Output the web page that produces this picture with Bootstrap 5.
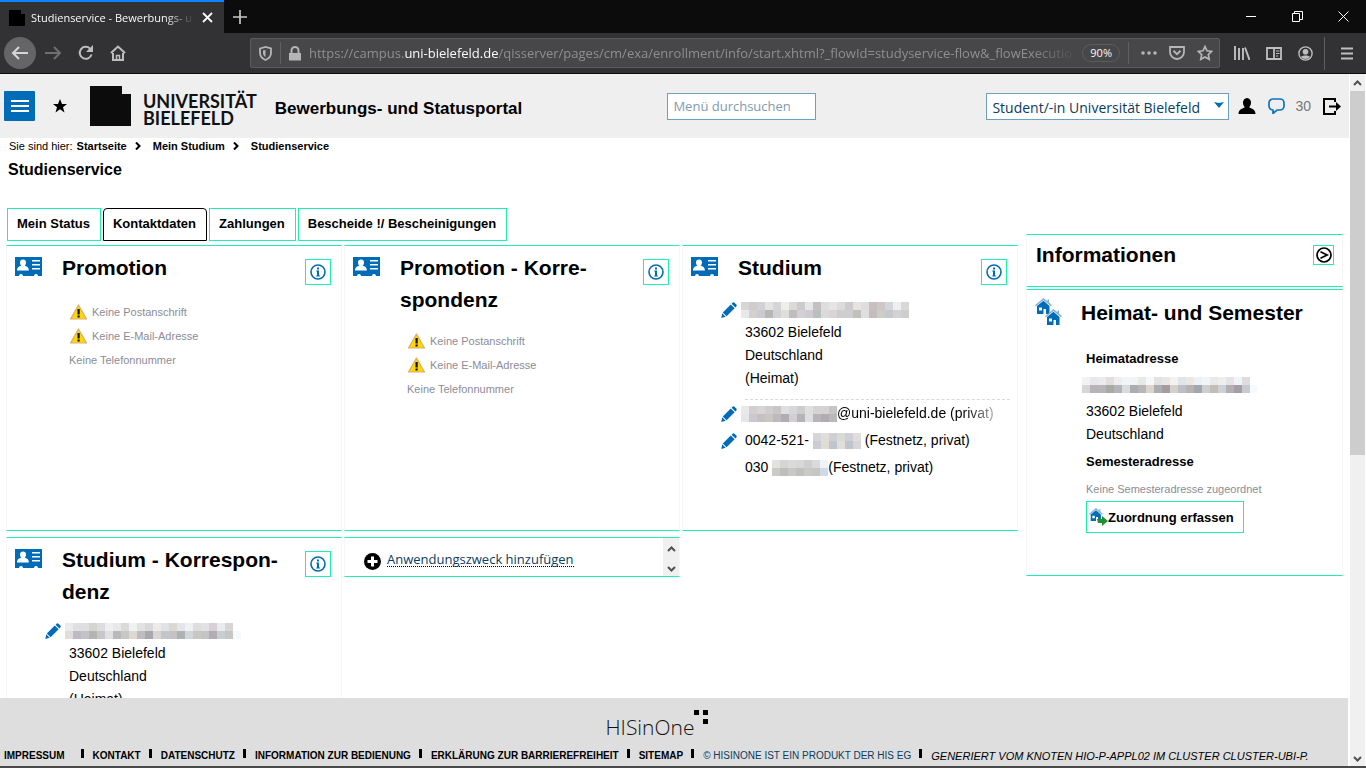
<!DOCTYPE html>
<html lang="de">
<head>
<meta charset="utf-8">
<meta name="viewport" content="width=device-width, initial-scale=1">
<title>Studienservice - Bewerbungs- und Statusportal</title>
<link href="https://cdn.jsdelivr.net/npm/bootstrap@5.3.0/dist/css/bootstrap.min.css" rel="stylesheet">
<style>
:root{--mint:#1ff0b0;--blue:#006cb8;--navy:#0b3c61;--arial:"Liberation Sans",Arial,sans-serif;--ui:"Open Sans","Noto Sans",sans-serif}
body{font-family:var(--arial);font-size:14px;line-height:23px;color:#000;background:#fff}
svg{display:block;flex:none}
a{color:inherit;text-decoration:none}
.icon-btn{border:0;padding:0;background:none;color:inherit;flex:none}

/* browser frame */
.tabstrip{background:#0c0c0d;height:33px;color:#f9f9fa;font:11px/18px var(--ui)}
.tab-active{background:#323234;border-top:2px solid #0a84ff;width:224px;padding-left:9px;padding-right:11px}
.tab-title{margin-left:6px;-webkit-mask-image:linear-gradient(90deg,#000 80%,transparent 98%);mask-image:linear-gradient(90deg,#000 80%,transparent 98%)}
.window-btns{gap:35px;padding-right:17px}
.toolbar{background:#323234;height:41px;border-bottom:1px solid #0c0c0d;color:#bebebf;padding:0 13px 0 4px}
.back{width:32px;height:32px;border-radius:50%;background:#656567;color:#d6d6d7}
.urlbar{background:#474749;border:1px solid #5c5c5e;border-radius:2px;height:30px;color:#b5b5b6;padding:0 6px 0 8px;margin-left:124px}
.url-text{font:13px/20px var(--ui);color:#8f8f91;-webkit-mask-image:linear-gradient(90deg,#000 94%,transparent);mask-image:linear-gradient(90deg,#000 94%,transparent)}
.url-text b{font-weight:400;color:#f9f9fa}
.zoom-pill{font:11px/16px var(--ui);color:#f9f9fa;border:1px solid #5c5c5e;border-radius:9px;padding:0 7px}
.sep{width:1px;background:#5f5f62}
.scrollbar-v{width:17px;background:#f0f0f0;border-left:1px solid #fff;border-right:1px solid #fff}
.scroll-thumb{height:364px;background:#cdcdcd}
.taskbar{height:2px;background:#4a4a4a}

/* portal header */
.portal-head{background:#efefef;height:64px;padding:0 8px 0 4px}
.menu-btn{width:31px;height:30px;background:var(--blue);border-radius:1px}
.fav-btn{margin:0 23px 0 18px}
.uni-name{font:700 18px/17px Lato,sans-serif;color:#111;margin-bottom:-1px}
.portal-title{font-size:17px;font-weight:700;margin-left:18px}
.search{width:149px;height:27px;border:1px solid #6d9fc2;border-radius:0;padding:0 5px;font:13px/18px var(--ui);color:var(--navy)}
.search::placeholder{color:#7f9bb0;opacity:1}
.role-wrap{margin:0 1px 0 170px}
.role{width:243px;height:27px;border:1px solid #6d9fc2;background:#fff;appearance:none;padding:4px 5px 0;font:14px/20px var(--ui);color:var(--navy);border-radius:0}
.role-arrow{right:5px;top:9px;pointer-events:none}
.msg-count{color:#777}

/* content */
.crumbs{font-size:11px;line-height:16px;padding:0 9px}
.page-title{font-size:16px;line-height:20px;font-weight:700;padding-left:8px;margin:6px 0 28px}
.main-row{padding:0 6px;gap:8px}
.side{flex:0 0 317px;padding-top:26px}
.tab-btn{border:1px solid var(--mint);background:#fff;color:#000;font-size:13px;font-weight:700;line-height:20px;height:33px;padding:0 10px 2px 9px;border-radius:0}
.tab-btn.current{border-color:#000;border-radius:4px 4px 0 0}
.tiles{display:grid;grid-template-columns:repeat(3,minmax(0,1fr));gap:6px 2px;align-items:start}
.tile{border:1px solid #f7f7f7;border-top-color:var(--mint);border-bottom-color:var(--mint);background:#fff}
.tile-tall{height:286px}
.tile-head{padding:6px 10px 0 8px}
.tile-head h2,.side-title{font-size:21px;line-height:32px;font-weight:700;margin:0}
.tile-icon{width:27px;margin:5px 20px 0 0}
.info-btn{width:26px;height:26px;border:1px solid var(--mint);color:var(--blue);margin:7px 0 2px}
.hint{font-size:11px;line-height:24px;color:#8c8c96}
.tile-body{padding-left:62px}
.hints{padding-top:13px}
.addr{padding-top:11px}
.line-edit{margin-left:-24px;gap:8px}
.street{height:23px}
.masked{margin-left:-4px}
.divide{border-top:1px dashed #d9d9d9;margin:9px 7px 0 0}
.contact{line-height:27px;height:27px}
.fade-end{-webkit-mask-image:linear-gradient(90deg,#000 88%,transparent 106%);mask-image:linear-gradient(90deg,#000 88%,transparent 106%)}
.add-tile{height:40px}
.add-body{padding:8px 0 0 19px;gap:6px}
.add-link{font:13px/14px var(--ui);color:var(--navy);border-bottom:1px dotted #000}
.mini-scroll{width:16px;background:#f0f0f0}
.side-panel{height:53px;padding:4px 8px 0 9px}
.side-toggle{width:21px;height:20px;border:1px solid var(--mint);margin-top:6px}
.side-main{margin-top:2px;height:287px}
.side-main .tile-head{padding-top:7px}
.side-body{padding:18px 0 0 59px}
.houses{margin:1px 19px 0 0}
.strong13{font-size:13px;font-weight:700}
.assign{border:1px solid var(--mint);background:#fff;height:32px;padding:0 9px 0 2px;font-size:13px;font-weight:700;color:#000}

/* footer */
.foot{background:#dedede;height:68px;margin-right:1px}
.his{font:300 21px/26px "Open Sans",sans-serif;color:#111;padding-right:32px}
.his svg{margin-top:-4px}
.foot-links{font-size:10px;line-height:14px;font-weight:700;padding:0 4px 3px}
.foot-links em{font-size:11px}
.bar{flex:none;width:3px;height:9px;background:#000;margin:0 9px 0 8px}
.mosaic{display:inline-block;vertical-align:middle}
</style>
</head>
<body class="vh-100 d-flex flex-column overflow-hidden">

<svg class="d-none" xmlns="http://www.w3.org/2000/svg">
  <symbol id="i-card" viewBox="0 0 27 19"><path fill="#006cb8" d="M0 0h27v19h-4a2 2 0 0 0-4 0H8a2 2 0 0 0-4 0H0z"/><path fill="#fff" d="M8 2.500a3 3 0 0 1 3 3c0 1.500-.6 2.500-1.300 3.300 2.300.7 4 1.300 4.200 4.700H2c.2-3.400 2-4 4.300-4.700C5.600 8 5 7 5 5.500a3 3 0 0 1 3-3zM17 3h8v1.500h-8zM17 7h8v1.500h-8zM17 11h8v1.500h-8z"/></symbol>
  <symbol id="i-info" viewBox="0 0 16 16"><circle cx="8" cy="8" r="7" fill="none" stroke="currentColor" stroke-width="1.600"/><path fill="currentColor" d="M7 3.600h2v1.800H7zM6.200 6.500H9v5h1v1H6.200v-1H7v-4h-.8z"/></symbol>
  <symbol id="i-warn" viewBox="0 0 18 16"><path d="M9 1 17 15H1z" fill="#ffd800" stroke="#d8ab7c" stroke-width="1.200" stroke-linejoin="round"/><path d="M8 5h2.200v5.500H8zM8 11.500h2.200v2H8z" fill="#111"/></symbol>
  <symbol id="i-pen" viewBox="0 0 16 16"><path fill="#006cb8" d="M11.500.8a1.500 1.500 0 0 1 2 0l1.800 1.800a1.500 1.500 0 0 1 0 2l-.9.9-3.800-3.800zM9.800 2.500l3.800 3.800-8 8L1.800 10.500zM1.200 11.300l3.500 3.500L.3 16z"/></symbol>
  <symbol id="i-house" viewBox="0 0 17 16"><path fill="#7fb2d9" d="M8.500 0 0 7.200l1 1L8.500 2 16 8.200l1-1-3-2.600V1.500h-1.500v1.800z"/><path fill="#006cb8" d="M8.500 2.800 14.500 8v8H11v-5H8.500v5H2V8zM4 9.500v3h3v-3z" fill-rule="evenodd"/></symbol>
  <symbol id="i-up" viewBox="0 0 9 6"><path d="M1 5l3.500-3.500L8 5" fill="none" stroke="#505050" stroke-width="2"/></symbol>
  <symbol id="i-down" viewBox="0 0 9 6"><path d="M1 1l3.500 3.500L8 1" fill="none" stroke="#505050" stroke-width="2"/></symbol>
  <symbol id="i-crumb" viewBox="0 0 6 8"><path d="M1 .5 4.500 4 1 7.500" fill="none" stroke="#000" stroke-width="2"/></symbol>
</svg>

<div class="tabstrip d-flex">
  <div class="tab-active d-flex align-items-center">
    <svg width="16" height="16" viewBox="0 0 16 16"><path d="M0 0h12v4h4v12H0z"/></svg>
    <span class="tab-title flex-grow-1 overflow-hidden text-nowrap">Studienservice - Bewerbungs- u</span>
    <button class="icon-btn ms-1" aria-label="Tab schließen"><svg width="11" height="11" viewBox="0 0 11 11"><path d="M1 1l9 9M10 1l-9 9" stroke="#f9f9fa" stroke-width="1.800"/></svg></button>
  </div>
  <button class="icon-btn ms-2" aria-label="Neuer Tab"><svg width="16" height="16" viewBox="0 0 16 16"><path d="M8 1v14M1 8h14" stroke="#c8c8c9" stroke-width="1.700"/></svg></button>
  <div class="window-btns ms-auto d-flex align-items-center">
    <button class="icon-btn" aria-label="Minimieren"><svg width="11" height="11"><path d="M0 5.500h10" stroke="#fff"/></svg></button>
    <button class="icon-btn" aria-label="Verkleinern"><svg width="11" height="11"><path d="M.5 2.500h7v8h-7zM2.500 2.500v-2h8v8h-3" fill="none" stroke="#fff"/></svg></button>
    <button class="icon-btn" aria-label="Schließen"><svg width="11" height="11"><path d="M.5.500l10 10M10.500.500l-10 10" stroke="#fff"/></svg></button>
  </div>
</div>

<div class="toolbar d-flex align-items-center">
  <button class="icon-btn back d-flex align-items-center justify-content-center" aria-label="Zurück"><svg width="18" height="16" viewBox="0 0 18 16"><path d="M8 2 2 8l6 6M2 8h15" fill="none" stroke="currentColor" stroke-width="2"/></svg></button>
  <button class="icon-btn ms-2" aria-label="Vor"><svg width="18" height="16" viewBox="0 0 18 16"><path d="M10 2l6 6-6 6M16 8H1" fill="none" stroke="#6f6f71" stroke-width="2"/></svg></button>
  <button class="icon-btn ms-3" aria-label="Neu laden"><svg width="16" height="16" viewBox="0 0 16 16"><path d="M13.500 9.500A6 6 0 1 1 12 3.600" fill="none" stroke="currentColor" stroke-width="2"/><path d="M15 0v7H8z" fill="currentColor"/></svg></button>
  <button class="icon-btn ms-3" aria-label="Startseite"><svg width="16" height="16" viewBox="0 0 16 16"><path d="M1 8l7-6.500L15 8M3 8v7h10V8" fill="none" stroke="currentColor" stroke-width="2"/><path d="M6.500 15v-4.500h3V15" fill="none" stroke="currentColor" stroke-width="1.500"/></svg></button>
  <div class="urlbar d-flex align-items-center flex-grow-1 overflow-hidden">
    <svg width="13" height="15" viewBox="0 0 13 15"><path d="M1 2.500 6.500 1 12 2.500V7c0 3-2 5.500-5.500 7C3 12.500 1 10 1 7z" fill="none" stroke="currentColor" stroke-width="1.800"/><path d="M6.500 4v7C4.800 10 4 8.500 4 7V4.600z" fill="currentColor"/></svg>
    <i class="sep ms-2 me-2" style="height:22px"></i>
    <svg width="12" height="15" viewBox="0 0 12 15"><path d="M0 7h12v7.500H0z" fill="currentColor"/><path d="M2.500 7V4.500a3.500 3.500 0 0 1 7 0V7" fill="none" stroke="currentColor" stroke-width="2"/></svg>
    <span class="url-text flex-grow-1 overflow-hidden text-nowrap ms-2">https://campus.<b>uni-bielefeld.de</b>/qisserver/pages/cm/exa/enrollment/info/start.xhtml?_flowId=studyservice-flow&amp;_flowExecutio</span>
    <span class="zoom-pill ms-1">90%</span>
    <i class="sep mx-2" style="height:22px"></i>
    <svg class="ms-1" width="16" height="4" viewBox="0 0 16 4"><circle cx="2" cy="2" r="1.800" fill="currentColor"/><circle cx="8" cy="2" r="1.800" fill="currentColor"/><circle cx="14" cy="2" r="1.800" fill="currentColor"/></svg>
    <svg class="ms-2 ps-1" width="20" height="14" viewBox="0 0 16 14"><path d="M1 1h14v5a7 7 0 0 1-14 0z" fill="none" stroke="currentColor" stroke-width="1.800"/><path d="M4.500 4.800 8 8.200l3.500-3.400" fill="none" stroke="currentColor" stroke-width="2"/></svg>
    <svg class="ms-2 ps-1" width="20" height="16" viewBox="0 0 16 16"><path d="M8 1.500l2 4.300 4.700.6-3.400 3.200.9 4.700L8 12l-4.200 2.300.9-4.700L1.300 6.400 6 5.800z" fill="none" stroke="currentColor" stroke-width="1.700"/></svg>
  </div>
  <div class="d-flex align-items-center gap-3" style="margin:0 3px 0 14px">
    <svg width="16" height="14" viewBox="0 0 16 14"><path d="M1 0v14M5 2v12M9 2v12M11 1.500 15.500 14" fill="none" stroke="currentColor" stroke-width="1.900"/></svg>
    <svg width="16" height="13" viewBox="0 0 16 13"><path d="M1 1h14v11H1zM8 1v11" fill="none" stroke="currentColor" stroke-width="1.800"/><path d="M10 4h3.500M10 6.500h3.500M10 9h2" stroke="currentColor"/></svg>
    <svg width="15" height="15" viewBox="0 0 15 15"><circle cx="7.500" cy="7.500" r="6.600" fill="none" stroke="currentColor" stroke-width="1.400"/><circle cx="7.500" cy="5.800" r="2.800" fill="currentColor"/><path d="M3 11c1-2 8-2 9 0a6 6 0 0 1-9 0z" fill="currentColor"/></svg>
  </div>
  <i class="sep ms-2 me-3" style="height:33px"></i>
  <svg width="12" height="13" viewBox="0 0 12 13"><path d="M0 1.500h12M0 6.500h12M0 11.500h12" stroke="currentColor" stroke-width="2"/></svg>
</div>

<div class="d-flex flex-grow-1 overflow-hidden">
  <div class="flex-grow-1 d-flex flex-column overflow-hidden">
    <header class="portal-head d-flex align-items-center">
      <button class="icon-btn menu-btn d-flex align-items-center justify-content-center" aria-label="Menü"><svg width="18" height="12" viewBox="0 0 18 12"><path d="M0 1h18M0 6h18M0 11h18" stroke="#fff" stroke-width="2"/></svg></button>
      <button class="icon-btn fav-btn" aria-label="Favoriten"><svg width="14" height="14" viewBox="0 0 14 14"><path d="M7 0l2 5h5l-4 3.200 1.500 5.300L7 10.300l-4.500 3.200L4 8.200 0 5h5z"/></svg></button>
      <a href="#" class="d-flex align-items-end text-black" aria-label="Universität Bielefeld">
        <svg width="41" height="40" viewBox="0 0 41 40"><path fill="#0c0c0c" d="M0 0h32v8h9v32H0z"/></svg>
        <span class="uni-name ms-2 ps-1">UNIVERSITÄT<br>BIELEFELD</span>
      </a>
      <span class="portal-title text-nowrap pt-1">Bewerbungs- und Statusportal</span>
      <input class="search ms-auto" type="text" placeholder="Menü durchsuchen" aria-label="Menü durchsuchen">
      <div class="role-wrap position-relative">
        <select class="role d-block" aria-label="Rolle"><option>Student/-in Universität Bielefeld</option></select>
        <svg class="role-arrow position-absolute" width="10" height="6" viewBox="0 0 10 6"><path d="M0 0l5 1 5-1-5 6z" fill="#006cb8"/></svg>
      </div>
      <a href="#" class="ms-2" aria-label="Profil"><svg width="18" height="16" viewBox="0 0 18 16"><path d="M9 0a4.200 4.200 0 0 1 4 4.500c0 2-.8 3.700-1.800 4.700 2 1.800 6.300 1.500 6.300 6.800H.5c0-5.300 4.300-5 6.300-6.800C5.800 8.200 5 6.500 5 4.500A4.200 4.200 0 0 1 9 0z"/></svg></a>
      <a href="#" class="d-flex align-items-center msg-count ms-2 ps-1" style="gap:10px"><svg width="17" height="16" viewBox="0 0 17 16"><path d="M5 1h7a4 4 0 0 1 4 4v3a4 4 0 0 1-4 4H9l-4 3.500V12a4 4 0 0 1-4-4V5a4 4 0 0 1 4-4z" fill="none" stroke="#0b74c0" stroke-width="1.700"/></svg>30</a>
      <a href="#" class="ms-2 ps-1" aria-label="Abmelden"><svg width="18" height="17" viewBox="0 0 18 17"><path d="M12 4V1H1v15h11v-3" fill="none" stroke="#000" stroke-width="2"/><path d="M6 7.500h7V4l5 4.500-5 4.500V9.500H6z"/></svg></a>
    </header>

    <main class="flex-grow-1 overflow-hidden" style="height:0">
      <nav class="crumbs d-flex align-items-center" aria-label="Brotkrumen">
        <span class="me-1">Sie sind hier:</span><a href="#" class="fw-bold">Startseite</a>
        <svg class="mx-2" width="6" height="8"><use href="#i-crumb"/></svg><a href="#" class="fw-bold ms-1">Mein Studium</a>
        <svg class="mx-2" width="6" height="8"><use href="#i-crumb"/></svg><a href="#" class="fw-bold ms-1">Studienservice</a>
      </nav>
      <h1 class="page-title">Studienservice</h1>

      <div class="main-row d-flex align-items-start">
        <div class="flex-grow-1">
          <div class="d-flex mb-1" style="gap:2px;padding-left:1px">
            <button class="tab-btn">Mein Status</button>
            <button class="tab-btn current">Kontaktdaten</button>
            <button class="tab-btn">Zahlungen</button>
            <button class="tab-btn">Bescheide !/ Bescheinigungen</button>
          </div>
          <div class="tiles">
            <section class="tile tile-tall">
              <div class="tile-head d-flex align-items-start">
                <svg class="tile-icon" height="19"><use href="#i-card"/></svg>
                <h2 class="flex-grow-1">Promotion</h2>
                <button class="icon-btn info-btn d-flex align-items-center justify-content-center" aria-label="Info"><svg width="16" height="16"><use href="#i-info"/></svg></button>
              </div>
              <div class="tile-body hints hint">
                <div class="d-flex align-items-center gap-1"><svg width="19" height="16"><use href="#i-warn"/></svg>Keine Postanschrift</div>
                <div class="d-flex align-items-center gap-1"><svg width="19" height="16"><use href="#i-warn"/></svg>Keine E-Mail-Adresse</div>
                <div>Keine Telefonnummer</div>
              </div>
            </section>
            <section class="tile tile-tall">
              <div class="tile-head d-flex align-items-start">
                <svg class="tile-icon" height="19"><use href="#i-card"/></svg>
                <h2 class="flex-grow-1">Promotion - Korre-<br>spondenz</h2>
                <button class="icon-btn info-btn d-flex align-items-center justify-content-center" aria-label="Info"><svg width="16" height="16"><use href="#i-info"/></svg></button>
              </div>
              <div class="tile-body hints hint">
                <div class="d-flex align-items-center gap-1"><svg width="19" height="16"><use href="#i-warn"/></svg>Keine Postanschrift</div>
                <div class="d-flex align-items-center gap-1"><svg width="19" height="16"><use href="#i-warn"/></svg>Keine E-Mail-Adresse</div>
                <div>Keine Telefonnummer</div>
              </div>
            </section>
            <section class="tile tile-tall">
              <div class="tile-head d-flex align-items-start">
                <svg class="tile-icon" height="19"><use href="#i-card"/></svg>
                <h2 class="flex-grow-1">Studium</h2>
                <button class="icon-btn info-btn d-flex align-items-center justify-content-center" aria-label="Info"><svg width="16" height="16"><use href="#i-info"/></svg></button>
              </div>
              <div class="tile-body addr">
                <div class="line-edit street d-flex align-items-center"><a href="#" aria-label="Adresse bearbeiten"><svg width="16" height="16"><use href="#i-pen"/></svg></a><svg class="masked mosaic" data-mosaic="street1"></svg></div>
                <div>33602 Bielefeld</div>
                <div>Deutschland</div>
                <div>(Heimat)</div>
                <div class="divide"></div>
                <div class="line-edit contact d-flex align-items-center"><a href="#" aria-label="E-Mail bearbeiten"><svg width="16" height="16"><use href="#i-pen"/></svg></a><span class="fade-end d-flex align-items-center masked text-nowrap"><svg class="mosaic" data-mosaic="mail"></svg>@uni-bielefeld.de (privat)</span></div>
                <div class="line-edit contact d-flex align-items-center"><a href="#" aria-label="Telefon bearbeiten"><svg width="16" height="16"><use href="#i-pen"/></svg></a><span class="text-nowrap">0042-521-<svg class="mosaic ms-1" data-mosaic="phone1"></svg> (Festnetz, privat)</span></div>
                <div class="contact text-nowrap">030 <svg class="mosaic" data-mosaic="phone2"></svg>(Festnetz, privat)</div>
              </div>
            </section>
            <section class="tile tile-tall">
              <div class="tile-head d-flex align-items-start">
                <svg class="tile-icon" height="19"><use href="#i-card"/></svg>
                <h2 class="flex-grow-1 text-nowrap">Studium - Korrespon-<br>denz</h2>
                <button class="icon-btn info-btn d-flex align-items-center justify-content-center" aria-label="Info"><svg width="16" height="16"><use href="#i-info"/></svg></button>
              </div>
              <div class="tile-body addr">
                <div class="line-edit street d-flex align-items-center"><a href="#" aria-label="Adresse bearbeiten"><svg width="16" height="16"><use href="#i-pen"/></svg></a><svg class="masked mosaic" data-mosaic="street2"></svg></div>
                <div>33602 Bielefeld</div>
                <div>Deutschland</div>
                <div>(Heimat)</div>
              </div>
            </section>
            <section class="tile add-tile d-flex">
              <div class="add-body flex-grow-1 d-flex align-items-center">
                <svg width="17" height="17" viewBox="0 0 17 17"><circle cx="8.500" cy="8.500" r="8.500"/><path d="M8.500 3.500v10M3.500 8.500h10" stroke="#fff" stroke-width="3"/></svg>
                <a href="#" class="add-link mb-1">Anwendungszweck hinzufügen</a>
              </div>
              <div class="mini-scroll d-flex flex-column align-items-center justify-content-between py-1"><svg class="mt-1" width="9" height="6"><use href="#i-up"/></svg><svg width="9" height="6"><use href="#i-down"/></svg></div>
            </section>
          </div>
        </div>

        <aside class="side">
          <section class="tile side-panel d-flex align-items-start">
            <h2 class="side-title flex-grow-1">Informationen</h2>
            <button class="icon-btn side-toggle d-flex align-items-center justify-content-center" aria-label="Aufklappen"><svg width="16" height="16" viewBox="0 0 16 16"><circle cx="8" cy="8" r="7" fill="none" stroke="#000" stroke-width="1.700"/><path d="M4.500 4.800 11 8l-6.500 3.200" fill="none" stroke="#000" stroke-width="1.800"/></svg></button>
          </section>
          <section class="tile side-main">
            <div class="tile-head d-flex align-items-start">
              <svg class="houses" width="27" height="27" viewBox="0 0 27 27"><use href="#i-house" width="17" height="16"/><use href="#i-house" x="10" y="11" width="17" height="16"/></svg>
              <h2 class="text-nowrap">Heimat- und Semester</h2>
            </div>
            <div class="side-body">
              <div class="strong13">Heimatadresse</div>
              <div class="d-flex align-items-center" style="height:30px"><svg class="masked mosaic" data-mosaic="street3"></svg></div>
              <div>33602 Bielefeld</div>
              <div>Deutschland</div>
              <div class="strong13 mt-1">Semesteradresse</div>
              <div class="hint mt-1">Keine Semesteradresse zugeordnet</div>
              <button class="assign d-flex align-items-center"><svg width="19" height="18" viewBox="0 0 19 18"><use href="#i-house" width="14" height="13"/><path fill="#1f8f2f" d="M8 11h5V8l6 5-6 5v-3H9z"/></svg><span>Zuordnung erfassen</span></button>
            </div>
          </section>
        </aside>
      </div>
    </main>

    <footer class="foot d-flex flex-column">
      <a href="#" class="his d-flex justify-content-center mt-3" aria-label="HISinOne"><span>HISinOne</span><svg width="16" height="15" viewBox="0 0 16 15"><path d="M0 0h5v5H0zM9 0h5v5H9zM9 9h5v5H9z"/></svg></a>
      <div class="foot-links d-flex mt-auto text-nowrap">
        <a href="#">IMPRESSUM</a><i class="bar ms-3"></i><a href="#">KONTAKT</a><i class="bar"></i><a href="#">DATENSCHUTZ</a><i class="bar"></i><a href="#">INFORMATION ZUR BEDIENUNG</a><i class="bar"></i><a href="#">ERKLÄRUNG ZUR BARRIEREFREIHEIT</a><i class="bar"></i><a href="#">SITEMAP</a><i class="bar"></i><a href="#" class="fw-normal" style="color:var(--navy)">© HISINONE IST EIN PRODUKT DER HIS EG</a><i class="bar"></i><em class="fw-normal">GENERIERT VOM KNOTEN HIO-P-APPL02 IM CLUSTER CLUSTER-UBI-P.</em>
      </div>
    </footer>
  </div>
  <div class="scrollbar-v d-flex flex-column align-items-center">
    <svg class="my-1" width="9" height="9" viewBox="0 -2 9 9"><use href="#i-up" width="9" height="6"/></svg>
    <div class="scroll-thumb w-100"></div>
    <svg class="mt-auto mb-1" width="9" height="6"><use href="#i-down"/></svg>
  </div>
</div>
<div class="taskbar"></div>

<script>
/* Pixelated blocks over private data: two rows of 8px cells per block */
const blocks = {
  street1: ["d6d6d6 cdcdcd d2d2d4 e3e3e3 d6d4d6 eeeeec dcdad8 cbcbcb e6e6e6 c5bfc1 dedede e6e4e6 dcdcda cdcbcd e6e4e0 dedede c9bfc1 cfc7c7 d2d6da eeeff3 d8d8d6","e9e9eb d6cfcf cbc9d2 b7b7b3 d2d2d6 dededc c0bcbf d2d0d4 d0c9cf b9bfbd dadada dad4d6 ccced0 d0cecc c0c0bf e0dede c6bcbc ccccc9 c5c9cc d2d2d6 cecece"],
  street2: ["ecebec e0e0e2 dfdfe2 d4d4d2 dddddf eeeff2 e8e8e8 dadad8 eff2f4 e2e2e0 d9d9db efe9e7 dfe3e8 dcd7d3 e3e5e8 edf1f4 dededc e2e2e2 d7d1d7 e8eced d6d6d4 ffffff","dfdddc bcbbc2 c4c3c9 b4b5b1 c7c6cb e0e0e1 b9b9ba c7c7c7 dfd8d0 bcbdc0 aaa6ae d9d5d2 c3c6c8 c5c2c3 aeb2b5 d2d6d9 cac7c2 c3c4c4 b3adb3 c8cdd1 c6c6c4 f5faff"],
  street3: ["f3f2f3 e8e8ea ebebec e0dfdd eeeef0 f3f4f6 f1f3f4 e8e8e5 f5f8fa e2e3e0 e7e7e8 f5f1ec e0e5ea ece6e4 edf1f4 f2f4f7 e9e9ea eeeeed e6e3e8 f1f4f6 dddddc ffffff","d8d5d7 b5b4b9 b7b5b8 a9a9a6 b5b4b7 dadbdc acadb0 b8b6b9 dad4cb abb0af a39da2 d6d0ca bdc0c2 b8b2b4 a1a7ad ccced2 c0beb7 cdd1d5 b2b0b7 a69ea4 c5cbd0 f5faff"],
  mail: ["eae8ea d2cfcf d8d5d4 cfcdcf cac5c7 dfdfe1 d7d7d7 cecdcd dedfdf d5d3d4 d3d3d2 c6c5c6","e6e6e8 cac8ce c5c0c2 c7c7c4 bdbabe afadb3 d0cfd4 b7b2b8 dde0df b8b5b9 afadb1 b9b8bb"],
  phone1: ["d5d5da dfdedb cfcfd4 dbd9d5 ced0d6 e0dddc","c9ccd2 e0dbd5 bfc5cf e1ddd9 bfc4ce d7d5d5"],
  phone2: ["e4e2e1 d5d5d6 dadadb d7d7d6 cecece dadada eef3fb","cbcbc6 bebebc c8c8c7 c0c0bf c9c9c5 c5c5c3 d0dae7"]
};
document.querySelectorAll("[data-mosaic]").forEach(svg => {
  const rows = blocks[svg.dataset.mosaic].map(r => r.split(" "));
  svg.setAttribute("width", rows[0].length * 8);
  svg.setAttribute("height", 16);
  rows.forEach((row, y) => row.forEach((c, x) => {
    const r = document.createElementNS("http://www.w3.org/2000/svg", "rect");
    Object.entries({x: x * 8, y: y * 8, width: 8, height: 8, fill: "#" + c}).forEach(([k, v]) => r.setAttribute(k, v));
    svg.appendChild(r);
  }));
});
</script>
<script src="https://cdn.jsdelivr.net/npm/bootstrap@5.3.0/dist/js/bootstrap.bundle.min.js"></script>
</body>
</html>
